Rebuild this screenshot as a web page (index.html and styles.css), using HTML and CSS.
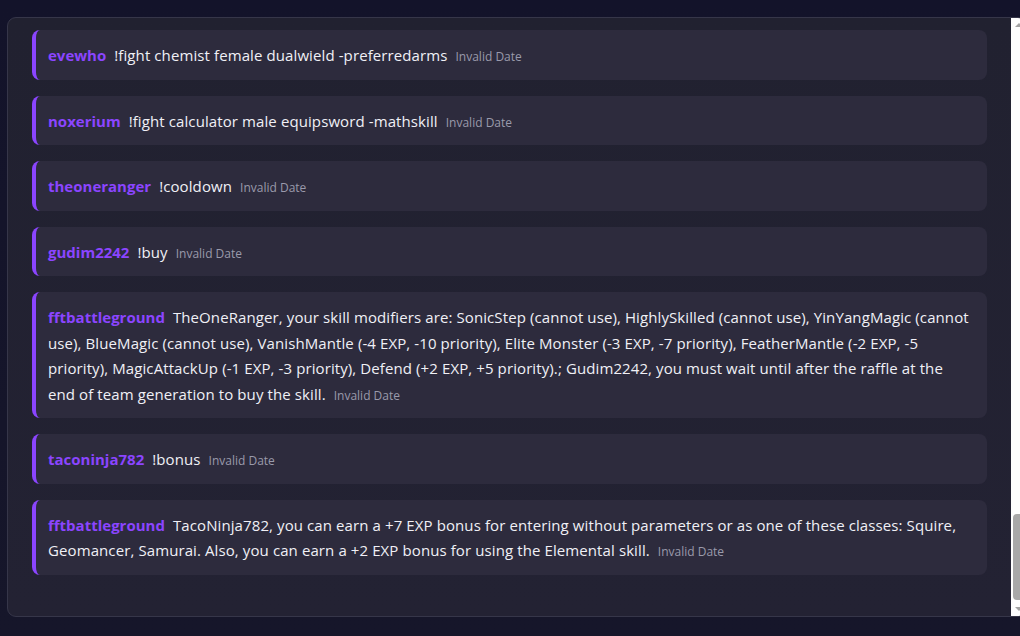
FILE: index.html
```html
<!DOCTYPE html>
<html lang="en">
<head>
<meta charset="utf-8">
<title>Chat log</title>
<link rel="stylesheet" href="styles.css">
</head>
<body>
<div class="page">
  <section class="panel">
    <div class="feed">
      <div class="msg"><span class="user">evewho</span><span class="text">!fight chemist female dualwield -preferredarms</span><span class="date">Invalid Date</span></div>
      <div class="msg"><span class="user">noxerium</span><span class="text">!fight calculator male equipsword -mathskill</span><span class="date">Invalid Date</span></div>
      <div class="msg"><span class="user">theoneranger</span><span class="text">!cooldown</span><span class="date">Invalid Date</span></div>
      <div class="msg"><span class="user">gudim2242</span><span class="text">!buy</span><span class="date">Invalid Date</span></div>
      <div class="msg"><span class="user">fftbattleground</span><span class="text">TheOneRanger, your skill modifiers are: SonicStep (cannot use), HighlySkilled (cannot use), YinYangMagic (cannot use), BlueMagic (cannot use), VanishMantle (-4 EXP, -10 priority), Elite Monster (-3 EXP, -7 priority), FeatherMantle (-2 EXP, -5 priority), MagicAttackUp (-1 EXP, -3 priority), Defend (+2 EXP, +5 priority).; Gudim2242, you must wait until after the raffle at the end of team generation to buy the skill.</span><span class="date">Invalid Date</span></div>
      <div class="msg"><span class="user">taconinja782</span><span class="text">!bonus</span><span class="date">Invalid Date</span></div>
      <div class="msg"><span class="user">fftbattleground</span><span class="text">TacoNinja782, you can earn a +7 EXP bonus for entering without parameters or as one of these classes: Squire, Geomancer, Samurai. Also, you can earn a +2 EXP bonus for using the Elemental skill.</span><span class="date">Invalid Date</span></div>
    </div>
    <div class="scrollbar" aria-hidden="true">
      <span class="arrow up"></span>
      <div class="track"><span class="thumb"></span></div>
      <span class="arrow down"></span>
    </div>
  </section>
</div>
</body>
</html>
```

FILE: styles.css
```css
* { box-sizing: border-box; }

html, body {
  margin: 0;
  height: 100%;
}

body {
  background: linear-gradient(#13132a, #16162a);
  overflow: hidden;
  font-family: "Open Sans", "Noto Sans", sans-serif;
  color: #f0f0f6;
}

.page {
  padding: 17px 0 0 7px;
  width: 1040px;
}

.panel {
  width: 1020px;
  height: 600px;
  border: 1px solid #363649;
  border-radius: 9px;
  background: linear-gradient(#212130, #232233);
  display: flex;
  overflow: hidden;
}

.feed {
  flex: 1;
  padding: 12px 24px 24px 24px;
  display: flex;
  flex-direction: column;
  gap: 16px;
}

.msg {
  background: #2d2b3d;
  border-left: 4px solid #8b45ff;
  border-radius: 8px;
  padding: 13px 16px 11px 12px;
  font-size: 15px;
  line-height: 1.7;
  letter-spacing: 0.1px;
}

.user {
  color: #8b45ff;
  font-weight: 700;
  margin-right: 8px;
  letter-spacing: 0;
}

.date {
  color: #9a9aab;
  font-size: 12px;
  margin-left: 8px;
  letter-spacing: 0;
}

.scrollbar {
  width: 15px;
  flex: none;
  background: #fdfdfd;
  display: flex;
  flex-direction: column;
  align-items: center;
}

.arrow {
  width: 0;
  height: 0;
  border-left: 4px solid transparent;
  border-right: 4px solid transparent;
  margin: 5px 0;
}

.arrow.up { border-bottom: 4px solid #a3a3a3; }
.arrow.down { border-top: 4px solid #a3a3a3; }

.track {
  flex: 1;
  width: 100%;
  display: flex;
  flex-direction: column;
  justify-content: flex-end;
  padding: 0 2px 0 2px;
}

.thumb {
  display: block;
  height: 86px;
  margin-bottom: 2px;
  background: #a8a8a8;
  border-radius: 4px;
}
```
